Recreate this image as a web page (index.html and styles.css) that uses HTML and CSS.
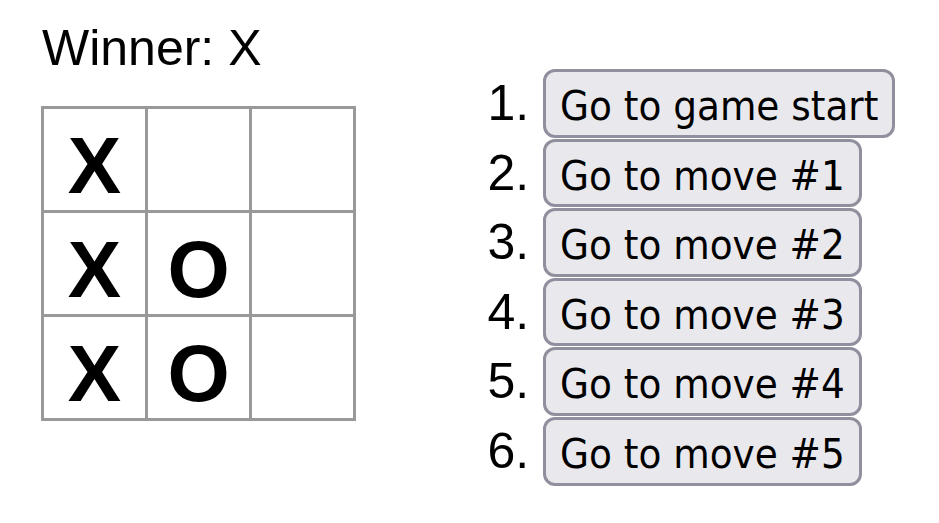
FILE: index.html
```html
<!DOCTYPE html>
<html>
<head>
<meta charset="utf-8">
<link rel="stylesheet" href="styles.css">
</head>
<body>
<div class="game">
  <div class="game-board">
    <div class="status">Winner: X</div>
    <div class="board">
      <button class="square">X</button>
      <button class="square"></button>
      <button class="square"></button>
      <button class="square">X</button>
      <button class="square">O</button>
      <button class="square"></button>
      <button class="square">X</button>
      <button class="square">O</button>
      <button class="square"></button>
    </div>
  </div>
  <div class="game-info">
    <ol class="moves">
      <li><button class="move">Go to game start</button></li>
      <li><button class="move">Go to move #1</button></li>
      <li><button class="move">Go to move #2</button></li>
      <li><button class="move">Go to move #3</button></li>
      <li><button class="move">Go to move #4</button></li>
      <li><button class="move">Go to move #5</button></li>
    </ol>
  </div>
</div>
</body>
</html>
```

FILE: styles.css
```css
html, body {
  margin: 0;
  background: #fff;
}
body {
  font-family: "Liberation Sans", Arial, sans-serif;
  font-size: 50px;
  color: #000;
}
.game {
  display: flex;
  flex-direction: row;
  padding: 19px 0 0 41px;
}
.status {
  margin-bottom: 28.5px;
  padding-left: 1px;
}
.board {
  display: grid;
  grid-template-columns: repeat(3, 104px);
  grid-auto-rows: 104.3px;
  border-left: 3px solid #999;
  border-top: 3px solid #999;
  width: 312px;
}
.square {
  box-sizing: border-box;
  width: 104px;
  height: 104.3px;
  margin: 0;
  padding: 0;
  border: 0;
  border-right: 3px solid #999;
  border-bottom: 3px solid #999;
  background: #fff;
  color: #000;
  font-family: "Liberation Sans", Arial, sans-serif;
  font-weight: bold;
  font-size: 80px;
  line-height: 113px;
  text-align: center;
  overflow: hidden;
}
.game-info {
  margin-left: 117px;
  margin-top: 50px;
}
.moves {
  margin: 0;
  padding-left: 70px;
}
.moves li {
  margin-bottom: 1px;
}
.move {
  font-family: "DejaVu Sans Condensed", "DejaVu Sans", sans-serif;
  font-size: 41.6px;
  color: #000;
  background: #e9e9ed;
  border: 3px solid #8f8f9d;
  border-radius: 12px;
  padding: 9px 14px 4.6px;
  margin: 0;
}
```
